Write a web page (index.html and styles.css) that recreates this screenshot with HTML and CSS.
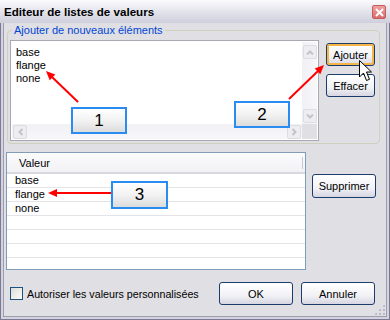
FILE: index.html
```html
<!DOCTYPE html>
<html lang="fr">
<head>
  <meta charset="UTF-8" />
  <title>Editeur de listes de valeurs</title>
  <link rel="stylesheet" href="styles.css">
</head>
<body>
  <div class="window">
    <!-- Barre de titre -->
    <div class="titlebar">
      <span class="title">Editeur de listes de valeurs</span>
      <span class="close">
        <svg width="9" height="9" viewBox="0 0 9 9"><path d="M1 1 L8 8 M8 1 L1 8" stroke="#fff" stroke-width="2"/></svg>
      </span>
    </div>

    <div class="frame">
      <div class="client">
        <!-- Groupe : ajout d'éléments -->
        <fieldset class="group">
          <legend>Ajouter de nouveaux éléments</legend>
          <div class="group-row">
            <div class="listbox">
              <ul class="items">
                <li>base</li>
                <li>flange</li>
                <li>none</li>
              </ul>
              <div class="vscroll">
                <span class="sb-btn"><svg width="8" height="5" viewBox="0 0 8 5"><path d="M1 4.5 L4 1.5 L7 4.5" fill="none" stroke="#c3c3cc" stroke-width="2"/></svg></span>
                <span class="sb-btn"><svg width="8" height="5" viewBox="0 0 8 5"><path d="M1 0.5 L4 3.5 L7 0.5" fill="none" stroke="#c3c3cc" stroke-width="2"/></svg></span>
              </div>
              <div class="hscroll">
                <span class="sb-btn"><svg width="5" height="8" viewBox="0 0 5 8"><path d="M4.5 1 L1.5 4 L4.5 7" fill="none" stroke="#c3c3cc" stroke-width="2"/></svg></span>
                <span class="sb-btn"><svg width="5" height="8" viewBox="0 0 5 8"><path d="M0.5 1 L3.5 4 L0.5 7" fill="none" stroke="#c3c3cc" stroke-width="2"/></svg></span>
              </div>
              <div class="corner"></div>
            </div>
            <div class="side-buttons">
              <button class="btn hot">Ajouter</button>
              <button class="btn">Effacer</button>
            </div>
          </div>
        </fieldset>

        <!-- Liste des valeurs -->
        <div class="values-row">
          <div class="listview">
            <div class="lv-header"><span>Valeur</span></div>
            <div class="lv-row">base</div>
            <div class="lv-row">flange</div>
            <div class="lv-row">none</div>
            <div class="lv-row"></div>
            <div class="lv-row"></div>
            <div class="lv-row"></div>
          </div>
          <button class="btn remove">Supprimer</button>
        </div>

        <!-- Pied de la boîte -->
        <div class="footer">
          <label class="check"><span class="box"></span>Autoriser les valeurs personnalisées</label>
          <button class="btn wide ok">OK</button>
          <button class="btn wide">Annuler</button>
        </div>
        <span class="grip"></span>
      </div>
    </div>

    <!-- Annotations -->
    <div class="callout c1">1</div>
    <div class="callout c2">2</div>
    <div class="callout c3">3</div>
    <svg class="arrows" width="390" height="320" viewBox="0 0 390 320">
      <g stroke="#f00" stroke-width="2" fill="none">
        <line x1="78" y1="102" x2="52" y2="77" />
        <line x1="289" y1="99" x2="318" y2="71" />
        <line x1="111" y1="193" x2="56" y2="193" />
      </g>
      <g fill="#f00">
        <polygon points="46,71 55.3,74.4 49.7,80.2" />
        <polygon points="324,65 320.3,74.2 314.7,68.4" />
        <polygon points="48,193 57,189 57,197" />
      </g>
    </svg>
    <svg class="cursor" width="14" height="22" viewBox="0 0 14 22">
      <path d="M0.5 0.5 L0.5 17 L4.5 13 L7.5 20.5 L10.5 19.3 L7.5 12 L12.5 12 Z" fill="#fff" stroke="#000" stroke-width="1" />
    </svg>
  </div>
</body>
</html>
```

FILE: styles.css
```css
/* Reset */
*, *::before, *::after {
  box-sizing: border-box;
  margin: 0;
  padding: 0;
}

body {
  margin: 0;
  background: #fff;
  font-family: "Liberation Sans", Arial, sans-serif;
  font-size: 11px;
  color: #000;
}

/* Fenêtre */
.window {
  position: relative;
  width: 390px;
  height: 320px;
  display: flex;
  flex-direction: column;
}

.titlebar {
  height: 23px;
  display: flex;
  align-items: center;
  justify-content: space-between;
  padding: 0 4px 1px 4px;
  background: linear-gradient(#fbfbfd, #e6e6ee 45%, #cfcfdc);
}
.title {
  font-weight: bold;
  font-size: 11.6px;
}
.close {
  width: 14px;
  height: 14px;
  margin-top: 2px;
  display: flex;
  align-items: center;
  justify-content: center;
  border: 1px solid #c55c5c;
  border-radius: 2px;
  background: linear-gradient(#f0a0a0, #dc6c6c);
}

.frame {
  flex: 1;
  display: flex;
  padding: 0 2px 2px;
  background: #d3d2de;
  border: 1px solid #7b7a95;
  border-top: none;
}
.client {
  position: relative;
  flex: 1;
  display: flex;
  flex-direction: column;
  background: #e0dfe3;
  border: 1px solid #9d9db0;
  border-top: none;
}

/* Groupe d'ajout */
.group {
  margin: 1px 6px 0 3px;
  padding: 3px 4px 2px 2px;
  border: 1px solid #d0d0bf;
  border-radius: 4px;
}
.group legend {
  margin-left: 2px;
  padding: 0 2px;
  color: #0046d5;
  line-height: 13px;
}
.group-row {
  display: flex;
  gap: 7px;
}

.listbox {
  width: 309px;
  height: 101px;
  display: grid;
  grid-template-columns: 1fr 15px;
  grid-template-rows: 1fr 15px;
  border: 1px solid #a9a9b4;
  padding: 1px;
  background: #fff;
}
.items {
  list-style: none;
  padding: 4px 0 0 4px;
  line-height: 13px;
}
.vscroll {
  display: flex;
  flex-direction: column;
  justify-content: space-between;
  padding: 3px 0 1px 1px;
  background: linear-gradient(90deg, #f1f1f5, #f7f7fa);
}
.hscroll {
  display: flex;
  justify-content: space-between;
  padding: 1px 1px 0 1px;
  background: linear-gradient(#f1f1f5, #f7f7fa);
}
.corner {
  background: #e0dfe3;
}
.sb-btn {
  width: 14px;
  height: 14px;
  display: flex;
  align-items: center;
  justify-content: center;
  border: 1px solid #dcdce2;
  border-radius: 2px;
  background: #eeeef1;
}

.side-buttons {
  display: flex;
  flex-direction: column;
  gap: 8px;
  padding-top: 3px;
}

/* Boutons style XP argent */
.btn {
  width: 49px;
  height: 23px;
  font-family: inherit;
  font-size: 11px;
  color: #000;
  border: 1px solid #1c3c6c;
  border-radius: 3px;
  background: linear-gradient(#ffffff, #f2f2f6 60%, #d6d5e2);
}
.btn.hot {
  box-shadow: inset 0 0 0 2px #f5b645;
}
.btn.remove {
  width: 64px;
  height: 24px;
  margin-top: 22px;
}
.btn.wide {
  width: 74px;
}
.btn.ok {
  margin-left: auto;
  margin-right: 8px;
}

/* Liste des valeurs */
.values-row {
  display: flex;
  gap: 6px;
  margin: 8px 0 0 2px;
}
.listview {
  width: 300px;
  height: 118px;
  border: 1px solid #7f9db9;
  background: #fff;
}
.lv-header {
  height: 21px;
  display: flex;
  align-items: center;
  padding-left: 12px;
  background: linear-gradient(#fbfbfc, #f2f2f5);
  border-bottom: 2px solid #d8d8e0;
  position: relative;
}
.lv-header::after {
  content: "";
  position: absolute;
  right: 2px;
  top: 4px;
  bottom: 3px;
  width: 1px;
  background: #c9c9d2;
}
.lv-row {
  height: 14px;
  line-height: 13px;
  padding-left: 8px;
  border-bottom: 1px solid #e3e3e8;
}

/* Pied */
.footer {
  display: flex;
  align-items: center;
  margin: 12px 11px 0 6px;
}
.check {
  display: flex;
  align-items: center;
  gap: 4px;
  font-size: 10.7px;
}
.check .box {
  width: 13px;
  height: 13px;
  border: 1px solid #1c5180;
  background: linear-gradient(135deg, #dcdcd7, #fbfbf9);
}

.grip {
  position: absolute;
  right: 1px;
  bottom: 1px;
  width: 11px;
  height: 11px;
  background: radial-gradient(circle, #b9b8c6 1px, transparent 1.5px) 0 0 / 4px 4px;
  clip-path: polygon(100% 0, 100% 100%, 0 100%);
}

/* Annotations superposées */
.callout {
  position: absolute;
  display: flex;
  align-items: center;
  justify-content: center;
  font-size: 17px;
  border: 2px solid #2a8cf0;
  background: linear-gradient(#ffffff, #f2f2f2 50%, #dcdcdc);
}
.c1 { left: 71px; top: 107px; width: 56px; height: 27px; }
.c2 { left: 234px; top: 101px; width: 56px; height: 27px; }
.c3 { left: 111px; top: 181px; width: 57px; height: 28px; }

.arrows {
  position: absolute;
  left: 0;
  top: 0;
  pointer-events: none;
}
.cursor {
  position: absolute;
  left: 359px;
  top: 60px;
  pointer-events: none;
}
```
